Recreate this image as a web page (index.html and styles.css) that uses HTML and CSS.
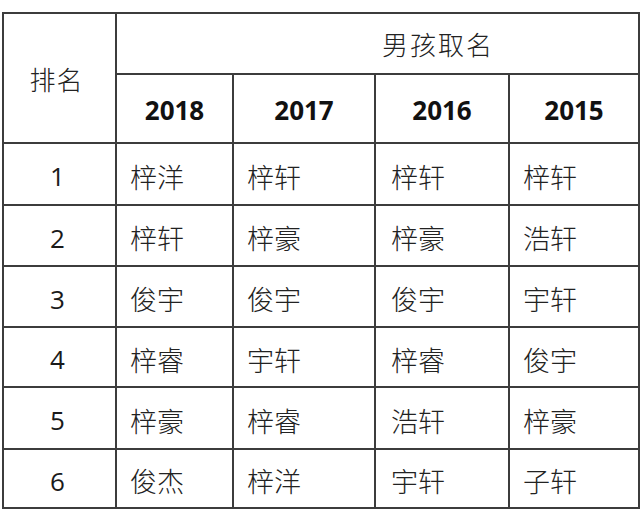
FILE: index.html
```html
<!DOCTYPE html>
<html lang="zh">
<head>
<meta charset="utf-8">
<link rel="stylesheet" href="styles.css">
</head>
<body>
<table class="names">
  <colgroup>
    <col class="c-rank"><col class="c-2018"><col class="c-2017"><col class="c-2016"><col class="c-2015">
  </colgroup>
  <thead>
    <tr class="h1">
      <th class="rank-head" rowspan="2">排名</th>
      <th class="group-head" colspan="4">男孩取名</th>
    </tr>
    <tr class="h2">
      <th class="year">2018</th>
      <th class="year">2017</th>
      <th class="year">2016</th>
      <th class="year">2015</th>
    </tr>
  </thead>
  <tbody>
    <tr class="r1"><td class="num">1</td><td class="nm">梓洋</td><td class="nm">梓轩</td><td class="nm p16">梓轩</td><td class="nm">梓轩</td></tr>
    <tr class="r2"><td class="num">2</td><td class="nm">梓轩</td><td class="nm">梓豪</td><td class="nm p16">梓豪</td><td class="nm">浩轩</td></tr>
    <tr class="r3"><td class="num">3</td><td class="nm">俊宇</td><td class="nm">俊宇</td><td class="nm p16">俊宇</td><td class="nm">宇轩</td></tr>
    <tr class="r4"><td class="num">4</td><td class="nm">梓睿</td><td class="nm">宇轩</td><td class="nm p16">梓睿</td><td class="nm">俊宇</td></tr>
    <tr class="r5"><td class="num">5</td><td class="nm">梓豪</td><td class="nm">梓睿</td><td class="nm p16">浩轩</td><td class="nm">梓豪</td></tr>
    <tr class="r6"><td class="num">6</td><td class="nm">俊杰</td><td class="nm">梓洋</td><td class="nm p16">宇轩</td><td class="nm">子轩</td></tr>
  </tbody>
</table>
</body>
</html>
```

FILE: styles.css
```css
html, body {
  margin: 0;
  padding: 0;
  background: #ffffff;
}

body {
  padding: 12px 0 0 2px;
}

.names {
  border-collapse: collapse;
  table-layout: fixed;
  width: 636px;
  color: #222222;
  font-family: "Noto Sans CJK SC", "Noto Sans", sans-serif;
}

.names th,
.names td {
  border: 2px solid #3c3c3c;
  padding: 0;
  overflow: hidden;
}

.c-rank { width: 113px; }
.c-2018 { width: 117px; }
.c-2017 { width: 142px; }
.c-2016 { width: 134px; }
.c-2015 { width: 130px; }

.h1 { height: 61px; }
.h2 { height: 69px; }
.r1 { height: 62px; }
.r2 { height: 61px; }
.r3 { height: 61px; }
.r4 { height: 60px; }
.r5 { height: 62px; }
.r6 { height: 59px; }

.names .rank-head {
  font-weight: 300;
  font-size: 26px;
  letter-spacing: 1px;
  text-align: center;
  padding-right: 6px;
}

.names .group-head {
  font-weight: 300;
  font-size: 26px;
  letter-spacing: 2px;
  text-align: left;
  padding-left: 265px;
}

.names .year {
  font-family: "Open Sans", "Liberation Sans", sans-serif;
  font-weight: 700;
  font-size: 26px;
  color: #111111;
  text-align: center;
  padding-top: 2px;
}

.names .num {
  font-family: "Open Sans", "Liberation Sans", sans-serif;
  font-weight: 400;
  font-size: 26px;
  color: #1a1a1a;
  text-align: center;
  padding-top: 4px;
  padding-right: 4px;
}

.names .nm {
  font-weight: 300;
  font-size: 27px;
  text-align: left;
  padding-left: 13px;
  padding-top: 4px;
}

.names .p16 { padding-left: 15px; }
```
